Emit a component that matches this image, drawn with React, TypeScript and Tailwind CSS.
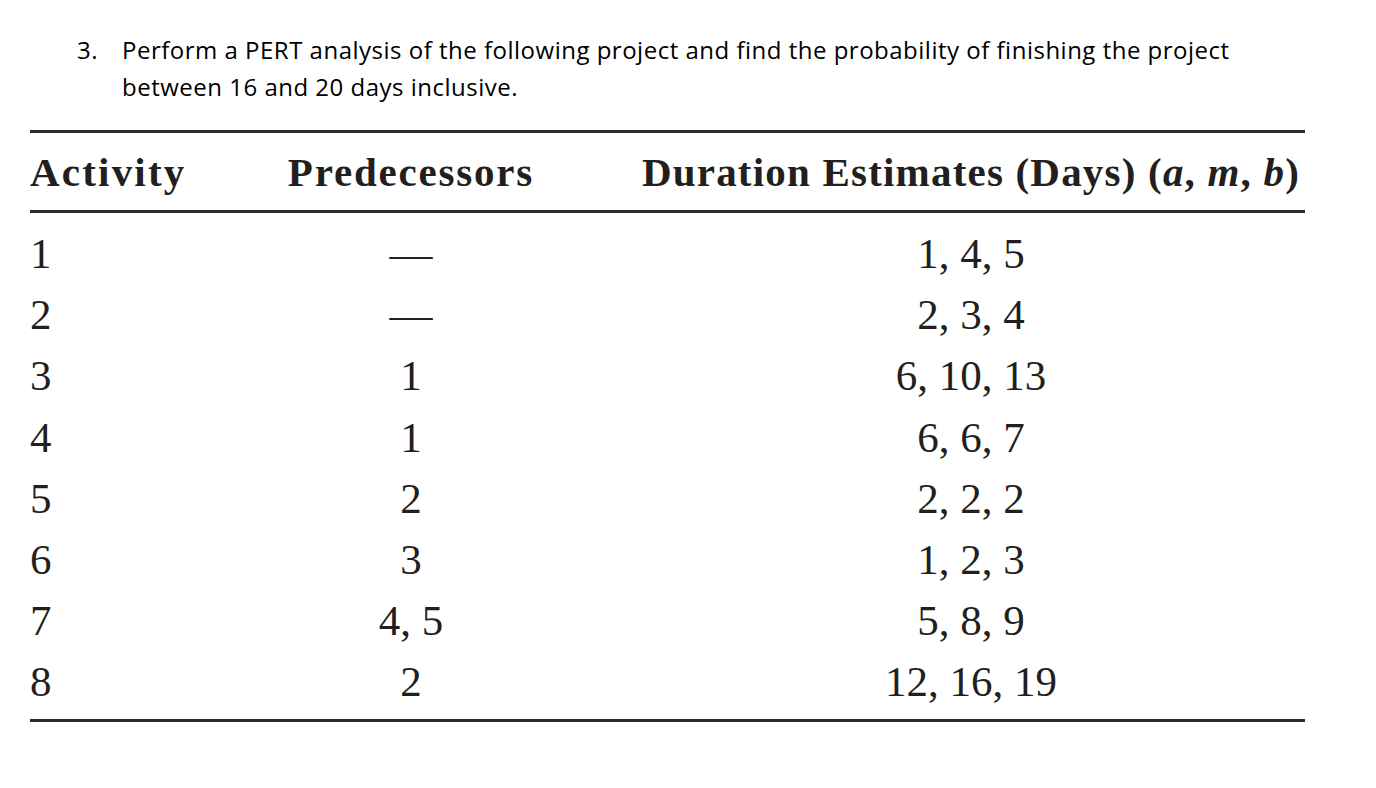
import React from "react";

const rows: [string, string, string][] = [
  ["1", "—", "1, 4, 5"],
  ["2", "—", "2, 3, 4"],
  ["3", "1", "6, 10, 13"],
  ["4", "1", "6, 6, 7"],
  ["5", "2", "2, 2, 2"],
  ["6", "3", "1, 2, 3"],
  ["7", "4, 5", "5, 8, 9"],
  ["8", "2", "12, 16, 19"],
];

export default function App() {
  return (
    <div className="w-[1376px] h-[788px] bg-white overflow-hidden">
      <div className="flex pt-[31px] pl-[77px] text-[24px] leading-[37px] tracking-[0.5px] text-black" style={{ fontFamily: "'Open Sans', Lato, sans-serif" }}>
        <div className="w-[45px] shrink-0">3.</div>
        <div className="w-[1200px] whitespace-nowrap">
          Perform a PERT analysis of the following project and find the probability of finishing the project
          <br />
          between 16 and 20 days inclusive.
        </div>
      </div>

      <div className="ml-[30px] mt-[25px] w-[1275px] border-t-[3px] border-b-[3px] border-[#2b2b2b] text-[#231f20]" style={{ fontFamily: "'Liberation Serif', serif" }}>
        <div className="grid grid-cols-[230px_302px_1fr] h-[80px] items-center border-b-[3px] border-[#2b2b2b] font-bold text-[41px] leading-none whitespace-nowrap">
          <div className="pt-[2px] tracking-[2.2px]">Activity</div>
          <div className="text-center pt-[2px] tracking-[1.8px]">Predecessors</div>
          <div className="text-center pl-[75px] pt-[2px] tracking-[1.2px]">
            Duration Estimates (Days) (<i>a</i>, <i>m</i>, <i>b</i>)
          </div>
        </div>
        <div className="pt-[10px] pb-[6px]">
          {rows.map((r, i) => (
            <div key={i} className="grid grid-cols-[230px_302px_1fr] h-[61.2px] items-center text-[43px] leading-none">
              <div>{r[0]}</div>
              <div className="text-center">{r[1]}</div>
              <div className="text-center pl-[75px]">{r[2]}</div>
            </div>
          ))}
        </div>
      </div>
    </div>
  );
}
